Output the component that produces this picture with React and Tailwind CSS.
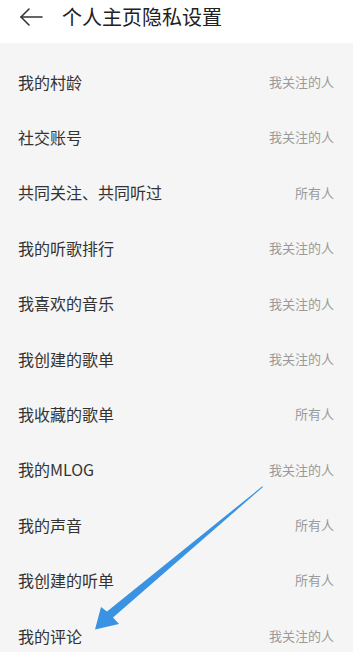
const ROWS = [
  { label: '我的村龄', value: '我关注的人' },
  { label: '社交账号', value: '我关注的人' },
  { label: '共同关注、共同听过', value: '所有人' },
  { label: '我的听歌排行', value: '我关注的人' },
  { label: '我喜欢的音乐', value: '我关注的人' },
  { label: '我创建的歌单', value: '我关注的人' },
  { label: '我收藏的歌单', value: '所有人' },
  { label: '我的MLOG', value: '我关注的人' },
  { label: '我的声音', value: '所有人' },
  { label: '我创建的听单', value: '所有人' },
  { label: '我的评论', value: '我关注的人' },
];

const FONT = { fontFamily: '"Noto Sans CJK SC", "Noto Sans", sans-serif' };

export default function App() {
  return (
    <div className="relative w-[355px] h-[652px] overflow-hidden bg-white" style={FONT}>
      <div className="flex items-center h-[43px] bg-white pl-[19px] pb-[10px]">
        <svg width="24" height="20" viewBox="0 0 24 20" fill="none" stroke="#333" strokeWidth="1.6" strokeLinecap="round" strokeLinejoin="round">
          <path d="M23 10H2" />
          <path d="M10 2L2 10L10 18" />
        </svg>
        <span className="ml-[19px] text-[20px] leading-none text-[#222]">个人主页隐私设置</span>
      </div>
      <div className="mr-[2px] h-full bg-[#f5f5f5] pt-[11px]">
        {ROWS.map((row) => (
          <div key={row.label} className="flex items-center justify-between h-[55.4px] pl-[18px] pr-[19px]">
            <span className="text-[16px] text-[#333]">{row.label}</span>
            <span className="text-[13px] text-[#9a9a9a]">{row.value}</span>
          </div>
        ))}
      </div>
      <svg className="absolute inset-0 pointer-events-none" width="355" height="652" viewBox="0 0 355 652">
        <polygon
          points="263,487 113,617.5 119,624 95,629.5 101,607 107,611.5 262.3,486.3"
          fill="#3a93e2"
        />
      </svg>
    </div>
  );
}
